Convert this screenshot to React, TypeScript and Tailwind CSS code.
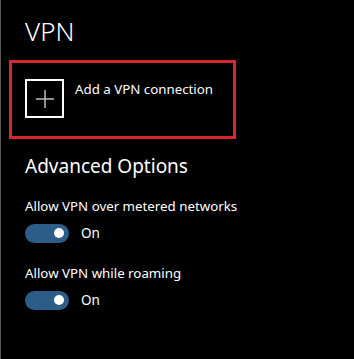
function Toggle() {
  return (
    <div className="flex items-center gap-3">
      <div className="w-[44px] h-[19px] rounded-full bg-[#2c5d88] flex items-center justify-end pr-[5px]">
        <div className="w-[10px] h-[10px] rounded-full bg-white" />
      </div>
      <span className="text-[13.5px] leading-[20px] text-white">On</span>
    </div>
  );
}

export default function App() {
  return (
    <div
      className="w-[354px] h-[359px] bg-black border-l border-[#5a5a5a] text-white"
      style={{ fontFamily: '"Noto Sans", "Open Sans", sans-serif' }}
    >
      <div className="pl-[24px] pt-[14px]">
        <h1 className="text-[26px] leading-[34px] font-light">VPN</h1>
      </div>

      <div className="ml-[8px] mt-[12px] w-[227px] h-[79px] border-[3px] border-[#d7262e] flex items-start pl-[13px] pt-[16px]">
        <div className="w-[39px] h-[39px] border-2 border-white flex items-center justify-center">
          <svg width="20" height="20" viewBox="0 0 20 20">
            <path d="M10 1v18M1 10h18" stroke="#bdbdbd" strokeWidth="1.5" />
          </svg>
        </div>
        <span className="ml-[11px] text-[13.3px] leading-[20px]">Add a VPN connection</span>
      </div>

      <div className="pl-[24px] pt-[13px]">
        <h2 className="text-[19px] leading-[28px]">Advanced Options</h2>
        <div className="mt-[16px] text-[13.3px] leading-[20px]">Allow VPN over metered networks</div>
        <div className="mt-[7px]">
          <Toggle />
        </div>
        <div className="mt-[20px] text-[13.3px] leading-[20px]">Allow VPN while roaming</div>
        <div className="mt-[7px]">
          <Toggle />
        </div>
      </div>
    </div>
  );
}
